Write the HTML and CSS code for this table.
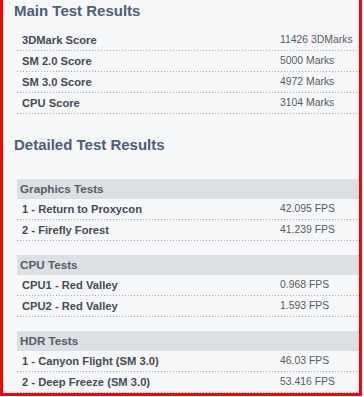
FILE: index.html
```html
<!DOCTYPE html>
<html>
<head>
<meta charset="utf-8">
<link rel="stylesheet" href="styles.css">
</head>
<body>
<div class="frame">
  <h2 class="title">Main Test Results</h2>
  <div class="table main">
    <div class="row"><span class="label">3DMark Score</span><span class="value">11426 3DMarks</span></div>
    <div class="row"><span class="label">SM 2.0 Score</span><span class="value">5000 Marks</span></div>
    <div class="row"><span class="label">SM 3.0 Score</span><span class="value">4972 Marks</span></div>
    <div class="row"><span class="label">CPU Score</span><span class="value">3104 Marks</span></div>
  </div>
  <h2 class="title detailed">Detailed Test Results</h2>
  <div class="table group first">
    <div class="group-head">Graphics Tests</div>
    <div class="row"><span class="label">1 - Return to Proxycon</span><span class="value">42.095 FPS</span></div>
    <div class="row"><span class="label">2 - Firefly Forest</span><span class="value">41.239 FPS</span></div>
  </div>
  <div class="table group">
    <div class="group-head">CPU Tests</div>
    <div class="row"><span class="label">CPU1 - Red Valley</span><span class="value">0.968 FPS</span></div>
    <div class="row"><span class="label">CPU2 - Red Valley</span><span class="value">1.593 FPS</span></div>
  </div>
  <div class="table group">
    <div class="group-head">HDR Tests</div>
    <div class="row"><span class="label">1 - Canyon Flight (SM 3.0)</span><span class="value">46.03 FPS</span></div>
    <div class="row"><span class="label">2 - Deep Freeze (SM 3.0)</span><span class="value">53.416 FPS</span></div>
  </div>
</div>
</body>
</html>
```
FILE: styles.css
```css
html, body {
  margin: 0;
  padding: 0;
  background: #ffffff;
}

body {
  font-family: "Liberation Sans", Arial, sans-serif;
}

.frame {
  box-sizing: border-box;
  width: 362px;
  height: 396px;
  border: 3px solid #ff0000;
  border-top: 0;
  background: #f7f8fa;
  overflow: hidden;
}

.title {
  margin: 0;
  padding: 2px 0 0 11px;
  font-size: 15px;
  line-height: 18px;
  font-weight: bold;
  color: #4e5d79;
}

.title.detailed {
  margin-top: 22px;
  padding-top: 0;
}

.table {
  margin-left: 14px;
}

.main {
  margin-top: 10px;
}

.row {
  display: grid;
  grid-template-columns: 263px 1fr;
  height: 20px;
  line-height: 20px;
  padding-bottom: 1px;
  background-image: linear-gradient(to right, #a9acb0 1px, transparent 1px);
  background-size: 3px 1px;
  background-repeat: repeat-x;
  background-position: 0 100%;
}

.label {
  padding-left: 5px;
  font-size: 11.2px;
  font-weight: bold;
  color: #454b53;
  white-space: nowrap;
}

.value {
  font-size: 10.4px;
  color: #575b60;
  white-space: nowrap;
}

.group {
  margin-top: 14px;
}

.group.first {
  margin-top: 25px;
}

.group-head {
  height: 20px;
  line-height: 20px;
  padding-left: 3px;
  background: #dce0e5;
  font-size: 11.7px;
  font-weight: bold;
  color: #555c66;
}
```
